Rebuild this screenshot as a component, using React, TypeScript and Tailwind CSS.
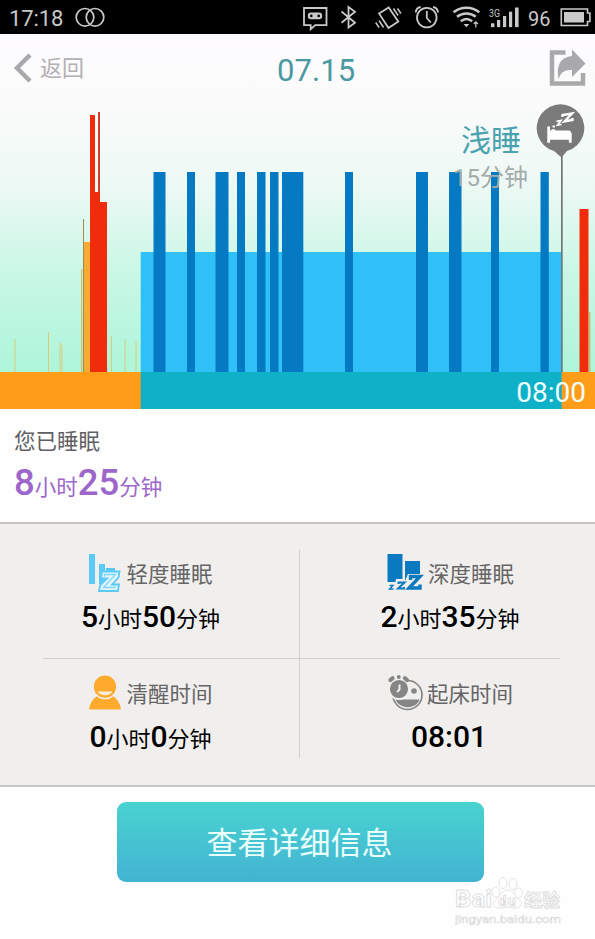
import type { ReactNode } from "react";

const CHART_BOTTOM = 272;

// [x, width, top], measured on a 595x309 chart
const AWAKE: [number, number, number][] = [
  [90, 5, 15],
  [95, 3, 92],
  [98, 2, 12],
  [100, 7, 102],
  [579.5, 9, 109],
];

const DEEP: [number, number][] = [
  [153.5, 12],
  [187, 8],
  [215.5, 13],
  [237, 8],
  [257, 8.5],
  [270, 8.5],
  [282, 21.3],
  [345, 8],
  [416, 12],
  [449, 12.5],
  [491, 8],
  [540.5, 8.3],
];

const NOISE: [number, number][] = [
  [14.5, 239],
  [48, 232],
  [59.5, 243],
  [61.5, 245],
  [111, 236],
  [124.5, 239],
  [135.5, 242],
];

function StatusBar() {
  return (
    <div className="flex h-[34px] items-center justify-between bg-black pl-[9px] pr-[2px] text-[#c9c9c9]">
      <div className="flex items-center gap-3">
        <span className="pt-[3px] text-[22px] leading-none tracking-[-0.1px]">17:18</span>
        <svg width="30" height="20" viewBox="0 0 30 20" fill="none" stroke="currentColor" strokeWidth="1.7">
          <circle cx="10" cy="10.3" r="8.8" />
          <circle cx="20" cy="10.3" r="8.8" />
        </svg>
      </div>
      <svg width="293" height="34" viewBox="300 0 293 34" fill="none" stroke="currentColor" strokeWidth="1.8">
        <path d="M304 8h22.5v17.2h-11.3l-4.5 4v-4H304z" />
        <rect x="307.8" y="12.6" width="14.4" height="6.6" rx="3.3" fill="currentColor" stroke="none" />
        <circle cx="311.3" cy="15.9" r="1.3" fill="#000" stroke="none" />
        <circle cx="318.7" cy="15.9" r="1.3" fill="#000" stroke="none" />
        <path d="M341.5 11.5l13.5 11.3-6.5 4.7V7l6.5 4.7-13.5 11" />
        <path d="M379 13.4l9.7-6 9.6 14.2-9.8 6.4z" />
        <path d="M379 20.5l4.6 7M375.7 22.5l3.4 5M393.5 8.5l4.6 7M397.5 8.5l3.4 5" strokeWidth="1.5" />
        <circle cx="426.8" cy="17.6" r="9.8" />
        <path d="M426.8 11v7l4 4.5M415.7 12.5c.2-3 2-5 5-5.5M438 12.5c-.2-3-2-5-5-5.5" />
        <path d="M453.5 12.2c7.5-6.1 18.3-6.1 25.8 0M457 16.8c5.6-4.5 13.3-4.5 18.8 0M460.8 21.2c3.5-2.8 7.8-2.8 11.3 0" strokeWidth="2.5" />
        <path d="M463.5 24h5.8l-2.9 3.2z" fill="currentColor" stroke="none" />
        <path d="M475.8 27.5v-5M473.7 24l2.1-2.1 2.1 2.1" strokeWidth="1.2" />
        <g fill="currentColor" stroke="none">
          <rect x="491" y="23.3" width="3.4" height="3.8" />
          <rect x="497" y="20" width="3.2" height="7.1" />
          <rect x="503" y="16" width="3.2" height="11.1" />
          <rect x="509" y="11.7" width="3.2" height="15.4" />
          <rect x="515" y="7.5" width="3.6" height="19.6" />
          <text x="489" y="16.5" fontSize="11" textLength="11" lengthAdjust="spacingAndGlyphs">3G</text>
          <text x="528" y="25.5" fontSize="20" textLength="22.5">96</text>
        </g>
        <path d="M561.3 9h26.2v4h2.4v8.500h-2.400v4h-26.200z" strokeWidth="1.6" />
        <rect x="564" y="12" width="20" height="10.5" fill="currentColor" stroke="none" />
      </svg>
    </div>
  );
}

function Header() {
  return (
    <header className="flex h-[66px] items-center pl-[13px] pr-[9px]">
      <button className="flex w-[264px] items-center gap-2 pt-[2px] text-[22px] text-[#b1b0b3]">
        <svg width="19" height="30" viewBox="0 0 19 30" fill="none" stroke="#a9a8ab" strokeWidth="4.5">
          <path d="M17 2L4 15l13 13" />
        </svg>
        返回
      </button>
      <h1 className="pt-[9px] text-[31px] tracking-[0.1px] text-[#4a99a1]">07.15</h1>
      <svg className="ml-auto mt-[2px]" width="37" height="38" viewBox="0 0 37 38">
        <path d="M16.500 3.5H3v31h31V24" fill="none" stroke="#a9a8ab" strokeWidth="4.5" />
        <path d="M23 0.5l13.500 14L23 28v-7c-7-.5-11 2-13.500 9C7 17 11 8 23 7z" fill="#a9a8ab" />
      </svg>
    </header>
  );
}

function SleepChart() {
  return (
    <div className="relative h-[309px]">
      <svg className="block" width="595" height="309" viewBox="0 0 595 309">
        {NOISE.map(([x, top]) => (
          <rect key={x} x={x} y={top} width="1" height={CHART_BOTTOM - top} fill="#dcca78" />
        ))}
        <rect x="81.2" y="169" width="1" height="103" fill="#d9b254" />
        <rect x="83" y="119" width="1" height="153" fill="#a38a52" />
        <rect x="84" y="142" width="6" height="130" fill="#f8ab32" />
        <rect x="589" y="212" width="1.5" height="60" fill="#cdbb72" />
        {AWAKE.map(([x, width, top]) => (
          <rect key={x} x={x} y={top} width={width} height={CHART_BOTTOM - top} fill="#f02c0c" />
        ))}
        <rect x="98" y="12" width="2" height="80" fill="#cf3f28" />
        <rect x="140.7" y="152" width="421" height="120" fill="#2fc0f8" />
        {DEEP.map(([x, width]) => (
          <rect key={x} x={x} y="72" width={width} height="200" fill="#0579c1" />
        ))}
        <rect x="0" y="272" width="595" height="37" fill="#ff9d19" />
        <rect x="140.7" y="272" width="421" height="37" fill="#0fb1c9" />
        <rect x="561" y="55" width="1.7" height="217" fill="#6f7876" />
        <path d="M561.5 57.5l-7.500-6.500a23.800 23.800 0 1 1 13 0z" fill="#7a7a7a" />
        <path d="M547.3 26.5h2.7v4.500c2-2.500 4.500-2 6-.5h12.500c2 0 3.200 2 3.200 4v8.200h-2.800v-3H550v3h-2.700z" fill="#fff" />
        <g fill="none" stroke="#fff">
          <path d="M562.5 17v-2l9.500-1.500-7.500 8 8-1.500v-2" strokeWidth="2.4" />
          <path d="M556.5 21.3l4.500-.8-3.500 4.500 4-.6" strokeWidth="1.7" />
          <path d="M552.5 26.5h2.500" strokeWidth="2" />
        </g>
      </svg>
      <div className="absolute right-[67px] top-[21px] flex flex-col items-end">
        <span className="mr-[7px] text-[30px] leading-[40px] text-[#4aa2af]">浅睡</span>
        <span className="text-[24px] leading-[34px] text-[#a5abab]">15分钟</span>
      </div>
      <span className="absolute bottom-[-2px] right-[9px] text-[28px] leading-[36px] text-[#effffc]">08:00</span>
    </div>
  );
}

function LightSleepIcon() {
  return (
    <svg width="34" height="40" viewBox="0 0 34 40">
      <path d="M1 1h6v30H1zM11 11h6v20h-6zM18 15h9v8h-9z" fill="#5bcaf8" />
      <path d="M14 18.500h17.500l-1 6-6.500 7h7l-1 6.500H11l1.200-6 7-6.500H13z" fill="#e2f6fe" stroke="#5bcaf8" strokeWidth="1.8" />
      <path d="M16.500 23.500V21.500h11L15.500 34.500H27V33" fill="none" stroke="#7fd6fa" strokeWidth="1.3" />
    </svg>
  );
}

function DeepSleepIcon() {
  return (
    <svg width="38" height="40" viewBox="0 0 38 40">
      <path d="M1.500 1h15v28h-15zM19 8h15v20H19z" fill="#0a79c0" />
      <path d="M10 26h9v2l3-7h15v5l-5 7h4v6H8z" fill="#f1efee" />
      <g fill="none" stroke="#0a79c0">
        <path d="M24.500 27v-3.500H34L23 35h11v-3.500" strokeWidth="3.4" />
        <path d="M12.500 31v-1.500h6L12 35.500h6V34" strokeWidth="2" />
        <path d="M3.500 32.500H7L3.500 36h4" strokeWidth="1.4" />
      </g>
    </svg>
  );
}

function AwakeIcon() {
  return (
    <svg width="34" height="40" viewBox="0 0 34 40" fill="#fdaa2d">
      <path d="M1 36.500c1-6.500 3.800-10.500 8-13.500h16c4.200 3 7 7 8 13.500z" />
      <circle cx="17" cy="13.7" r="11.9" stroke="#f1efee" strokeWidth="1.5" />
      <path d="M9.500 18.500h15c-2.500 5-12.500 5-15 0z" fill="#f7eee1" />
    </svg>
  );
}

function WakeUpIcon() {
  return (
    <svg width="38" height="40" viewBox="0 0 38 40">
      <circle cx="22.5" cy="22" r="14.5" fill="none" stroke="#858585" strokeWidth="1.7" />
      <path d="M10.500 26.500h24c-3 10-20 10.500-24 0z" fill="#858585" />
      <circle cx="29" cy="18" r="2.8" fill="#858585" />
      <circle cx="14" cy="16" r="10" fill="#858585" stroke="#f1efee" strokeWidth="1.8" />
      <path d="M14.500 11.500v5l-2.500 2.500" fill="none" stroke="#f1efee" strokeWidth="2" />
      <path d="M5.500 7l2-1.800M20 5.200l2 1.800" stroke="#858585" strokeWidth="4.2" strokeLinecap="round" />
      <circle cx="13.8" cy="4" r="1.9" fill="#858585" />
    </svg>
  );
}

function Stat({ icon, label, children }: { icon: ReactNode; label: string; children: ReactNode }) {
  return (
    <div className="flex flex-col items-center">
      <div className="flex h-10 items-center gap-1">
        {icon}
        <span className="pt-[5px] text-[21.5px] text-[#656565]">{label}</span>
      </div>
      <p className="mt-[4px] text-[22px] leading-10 text-black">{children}</p>
    </div>
  );
}

function Num({ children }: { children: ReactNode }) {
  return <span className="text-[30px] font-medium">{children}</span>;
}

function Watermark() {
  return (
    <svg className="absolute bottom-[10px] right-[28px]" width="112" height="56" viewBox="0 0 112 56" fill="#fff" stroke="#dcdcdc" strokeWidth="0.8">
      <text x="0" y="34" fontSize="23" fontWeight="700" textLength="37" lengthAdjust="spacingAndGlyphs">Bai</text>
      <ellipse cx="41" cy="19" rx="4" ry="5" />
      <ellipse cx="48" cy="10" rx="4" ry="5.5" />
      <ellipse cx="58" cy="11" rx="4" ry="5.5" />
      <ellipse cx="63.5" cy="20" rx="4" ry="5" />
      <path d="M52.500 17c-6 0-8 7-12 10-5 5-1 10 12 7 12 3 17-2 12-7-4-3-6-10-12-10z" />
      <text x="43" y="33" fontSize="15" fontWeight="700" textLength="18">du</text>
      <text x="69" y="34" fontSize="18" fontWeight="700" textLength="36">经验</text>
      <text x="0" y="50" fontSize="11.5" strokeWidth="0.6" textLength="106" lengthAdjust="spacingAndGlyphs">jingyan.baidu.com</text>
    </svg>
  );
}

export default function App() {
  return (
    <main className="relative w-[595px] overflow-hidden bg-[#fefefe] font-[Roboto,'Noto_Sans_CJK_SC',sans-serif] font-normal">
      <StatusBar />
      <section className="bg-[linear-gradient(#fdfbff_0px,#fcfbfb_60px,#edf9f4_150px,#c9f7e6_240px,#adf5d9_338px)]">
        <Header />
        <SleepChart />
      </section>

      <section className="h-[113px] px-[14px] pt-[17px]">
        <p className="text-[21.5px] leading-8 text-[#606064]">您已睡眠</p>
        <p className="text-[21.5px] leading-[50px] text-[#9d66cb]">
          <span className="text-[36.5px] font-medium">8</span>小时<span className="text-[36.5px] font-medium">25</span>分钟
        </p>
      </section>

      <section className="h-[265px] border-y-2 border-[#c6c4c3] bg-[#f1efee] pl-[43px] pr-[35px] pt-[26px]">
        <div className="grid h-[208px] grid-cols-[257px_260px] grid-rows-[109px_99px]">
          <div className="border-b border-r border-[#d1cfce] pr-[41px] pt-[3px]">
            <Stat icon={<LightSleepIcon />} label="轻度睡眠">
              <Num>5</Num>小时<Num>50</Num>分钟
            </Stat>
          </div>
          <div className="border-b border-[#d1cfce] pl-[40px] pt-[3px]">
            <Stat icon={<DeepSleepIcon />} label="深度睡眠">
              <Num>2</Num>小时<Num>35</Num>分钟
            </Stat>
          </div>
          <div className="border-r border-[#d1cfce] pr-[41px] pt-[14px]">
            <Stat icon={<AwakeIcon />} label="清醒时间">
              <Num>0</Num>小时<Num>0</Num>分钟
            </Stat>
          </div>
          <div className="pl-[38px] pt-[14px]">
            <Stat icon={<WakeUpIcon />} label="起床时间">
              <Num>08:01</Num>
            </Stat>
          </div>
        </div>
      </section>

      <section className="h-[152px] pl-[117px] pt-[15px]">
        <button className="block h-[80px] w-[367px] rounded-[9px] bg-gradient-to-b from-[#49d3d0] to-[#43b3d2] pr-[2px] pt-[5px] text-[31px] text-[#e9fffd]">
          查看详细信息
        </button>
        <Watermark />
      </section>
    </main>
  );
}
